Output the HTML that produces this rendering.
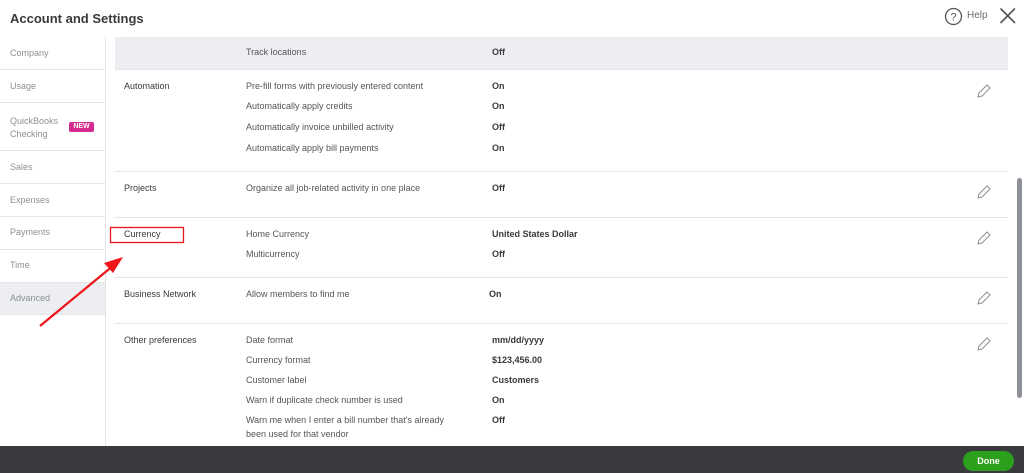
<!DOCTYPE html>
<html><head><meta charset="utf-8"><style>
*{margin:0;padding:0;box-sizing:border-box}
body{width:1024px;height:473px;overflow:hidden;background:#fff;font-family:"Liberation Sans",sans-serif;color:#393a3d;position:relative}
.t{position:absolute;font-size:9px;white-space:nowrap}
.b{font-weight:bold;color:#393a3d}
.g{color:#555}
.sb{position:absolute;left:0;width:105px;font-size:9px;color:#8d9096;padding-left:10px}
.hl{position:absolute;height:1px;background:#e3e5e8}
</style></head><body>
<div class="t" style="left:10px;top:11px;font-size:13px;font-weight:bold;color:#393a3d">Account and Settings</div>
<svg style="position:absolute;left:944px;top:7px" width="19" height="19"><circle cx="9.5" cy="9.5" r="8" fill="none" stroke="#555" stroke-width="1.3"/><text x="9.5" y="13.5" font-size="11" text-anchor="middle" fill="#555" font-family="Liberation Sans">?</text></svg>
<div class="t" style="left:967px;top:10px;font-size:10px;color:#6b6c72">Help</div>
<svg style="position:absolute;left:999px;top:7px" width="18" height="18"><path d="M1.5 1.5L16 16M16 1.5L1.5 16" stroke="#555" stroke-width="1.6"/></svg>

<div style="position:absolute;left:105px;top:37px;width:1px;height:409px;background:#e3e5e8"></div>
<div style="position:absolute;left:0;top:282px;width:105px;height:32px;background:#eceef1"></div>
<div class="sb" style="top:48px">Company</div>
<div class="hl" style="left:0;top:69px;width:105px"></div>
<div class="sb" style="top:81px">Usage</div>
<div class="hl" style="left:0;top:102px;width:105px"></div>
<div class="sb" style="top:115px;line-height:13px">QuickBooks<br>Checking</div>
<div style="position:absolute;left:69px;top:122px;width:25px;height:10px;background:#d52b8e;border-radius:2px;color:#fff;font-size:7px;font-weight:bold;text-align:center;line-height:10px">NEW</div>
<div class="hl" style="left:0;top:150px;width:105px"></div>
<div class="sb" style="top:162px">Sales</div>
<div class="hl" style="left:0;top:183px;width:105px"></div>
<div class="sb" style="top:195px">Expenses</div>
<div class="hl" style="left:0;top:216px;width:105px"></div>
<div class="sb" style="top:227px">Payments</div>
<div class="hl" style="left:0;top:249px;width:105px"></div>
<div class="sb" style="top:260px">Time</div>
<div class="hl" style="left:0;top:282px;width:105px"></div>
<div class="sb" style="top:293px">Advanced</div>
<div class="hl" style="left:0;top:314px;width:105px"></div>

<div style="position:absolute;left:115px;top:37px;width:893px;height:32px;background:#eceef1"></div>
<div class="t g" style="left:246px;top:47px">Track locations</div><div class="t b" style="left:492px;top:47px">Off</div>
<div class="hl" style="left:115px;top:69px;width:893px"></div>
<div class="t" style="left:124px;top:81px">Automation</div>
<div class="t g" style="left:246px;top:81px">Pre-fill forms with previously entered content</div><div class="t b" style="left:492px;top:81px">On</div>
<div class="t g" style="left:246px;top:101px">Automatically apply credits</div><div class="t b" style="left:492px;top:101px">On</div>
<div class="t g" style="left:246px;top:122px">Automatically invoice unbilled activity</div><div class="t b" style="left:492px;top:122px">Off</div>
<div class="t g" style="left:246px;top:143px">Automatically apply bill payments</div><div class="t b" style="left:492px;top:143px">On</div>
<div class="hl" style="left:115px;top:171px;width:893px"></div>
<div class="t" style="left:124px;top:183px">Projects</div>
<div class="t g" style="left:246px;top:183px">Organize all job-related activity in one place</div><div class="t b" style="left:492px;top:183px">Off</div>
<div class="hl" style="left:115px;top:217px;width:893px"></div>
<div class="t" style="left:124px;top:229px">Currency</div>
<div class="t g" style="left:246px;top:229px">Home Currency</div><div class="t b" style="left:492px;top:229px">United States Dollar</div>
<div class="t g" style="left:246px;top:249px">Multicurrency</div><div class="t b" style="left:492px;top:249px">Off</div>
<div class="hl" style="left:115px;top:277px;width:893px"></div>
<div class="t" style="left:124px;top:289px">Business Network</div>
<div class="t g" style="left:246px;top:289px">Allow members to find me</div><div class="t b" style="left:489px;top:289px">On</div>
<div class="hl" style="left:115px;top:323px;width:893px"></div>
<div class="t" style="left:124px;top:335px">Other preferences</div>
<div class="t g" style="left:246px;top:335px">Date format</div><div class="t b" style="left:492px;top:335px">mm/dd/yyyy</div>
<div class="t g" style="left:246px;top:355px">Currency format</div><div class="t b" style="left:492px;top:355px">$123,456.00</div>
<div class="t g" style="left:246px;top:375px">Customer label</div><div class="t b" style="left:492px;top:375px">Customers</div>
<div class="t g" style="left:246px;top:395px">Warn if duplicate check number is used</div><div class="t b" style="left:492px;top:395px">On</div>
<div class="t g" style="left:246px;top:413px;line-height:14px">Warn me when I enter a bill number that's already<br>been used for that vendor</div><div class="t b" style="left:492px;top:415px">Off</div>

<svg style="position:absolute;left:0;top:0" width="1024" height="473">
<g fill="none" stroke="#8d9096" stroke-width="1">
<path d="M979 93L987 85L990 88L982 96L978 97Z"/>
<path d="M979 194L987 186L990 189L982 197L978 198Z"/>
<path d="M979 240L987 232L990 235L982 243L978 244Z"/>
<path d="M979 300L987 292L990 295L982 303L978 304Z"/>
<path d="M979 346L987 338L990 341L982 349L978 350Z"/>
</g>
<rect x="110.5" y="227.5" width="73" height="15" fill="none" stroke="#e8141b" stroke-width="1.3"/>
<path d="M40 326L114 265" stroke="#f0141b" stroke-width="2.2"/>
<path d="M123 257L104 263L113 273Z" fill="#f0141b"/>
<rect x="1017" y="178" width="5" height="220" rx="2.5" fill="#8d9096"/>
</svg>

<div style="position:absolute;left:0;top:446px;width:1024px;height:27px;background:#393a3d"></div>
<div style="position:absolute;left:963px;top:451px;width:51px;height:20px;background:#2ca01c;border-radius:10px;color:#fff;font-size:9px;font-weight:bold;text-align:center;line-height:20px">Done</div>
</body></html>
